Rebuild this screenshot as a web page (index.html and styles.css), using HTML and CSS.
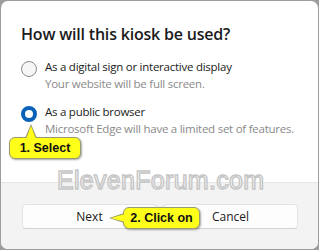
FILE: index.html
```html
<!DOCTYPE html>
<html>
<head>
<meta charset="utf-8">
<link rel="stylesheet" href="styles.css">
</head>
<body>
<div class="screen">
  <div class="dialog">
    <div class="content">
      <h1 class="title">How will this kiosk be used?</h1>
      <div class="option">
        <span class="radio"></span>
        <div class="labels">
          <div class="label">As a digital sign or interactive display</div>
          <div class="desc">Your website will be full screen.</div>
        </div>
      </div>
      <div class="option">
        <span class="radio checked"></span>
        <div class="labels">
          <div class="label">As a public browser</div>
          <div class="desc">Microsoft Edge will have a limited set of features.</div>
        </div>
      </div>
    </div>
    <div class="footer">
      <button class="btn">Next</button>
      <button class="btn">Cancel</button>
    </div>
    <div class="watermark">ElevenForum.com</div>
    <div class="callout callout-select">1. Select</div>
    <div class="callout callout-click">2. Click on</div>
  </div>
</div>
</body>
</html>
```
FILE: styles.css
```css
html, body {
  margin: 0;
  padding: 0;
}
body {
  width: 319px;
  height: 250px;
  background: #9d9d9d;
  overflow: hidden;
}
.screen {
  padding: 1px 1px 1px 1px;
  height: 248px;
}
.dialog {
  position: relative;
  width: 317px;
  height: 248px;
  background: #fff;
  border-radius: 7px;
  overflow: hidden;
  display: flex;
  flex-direction: column;
  font-family: "Open Sans", "Noto Sans", sans-serif;
  color: #1b1b1b;
}
.content {
  flex: 1;
  padding: 22px 20px 0 20px;
}
.title {
  margin: 0 0 13px 0;
  font-size: 16px;
  font-weight: 600;
  line-height: 22px;
  letter-spacing: -0.2px;
}
.option {
  display: flex;
  align-items: flex-start;
  gap: 8px;
  margin-bottom: 11px;
}
.radio {
  flex: none;
  box-sizing: border-box;
  width: 16px;
  height: 16px;
  margin-top: 3px;
  border-radius: 50%;
  border: 1px solid #8b8b8b;
  background: #f6f6f6;
}
.radio.checked {
  border: 4.5px solid #0a62b8;
  background: #fff;
}
.label {
  font-size: 11.5px;
  line-height: 17px;
  letter-spacing: -0.25px;
}
.desc {
  font-size: 11.5px;
  line-height: 17px;
  letter-spacing: -0.25px;
  color: #8a8a8a;
}
.footer {
  height: 67px;
  box-sizing: border-box;
  background: #f3f3f3;
  border-top: 1px solid #e6e6e6;
  padding: 21px 20px 0 21px;
  display: flex;
  gap: 6px;
  align-items: flex-start;
}
.btn {
  flex: 1;
  height: 25px;
  background: #fdfdfd;
  border: 1px solid #e3e3e3;
  border-bottom-color: #d2d2d2;
  border-radius: 4px;
  font-family: "Open Sans", "Noto Sans", sans-serif;
  font-size: 12px;
  color: #1b1b1b;
  padding: 0;
}
.watermark {
  position: absolute;
  left: 56px;
  top: 164px;
  font-family: "Liberation Sans", Arial, sans-serif;
  font-size: 25px;
  line-height: 30px;
  color: #ffffff;
  -webkit-text-stroke: 1.4px #c6c6c6;
  letter-spacing: 0.3px;
}
.callout {
  position: absolute;
  box-sizing: border-box;
  background: #ffff1a;
  border: 1px solid #9a9a70;
  border-radius: 6px;
  box-shadow: 1px 1px 2px rgba(0, 0, 0, 0.35);
  font-family: "Liberation Sans", Arial, sans-serif;
  font-weight: 700;
  font-size: 12.5px;
  color: #111;
  display: flex;
  align-items: center;
  justify-content: center;
}
.callout::before,
.callout::after {
  content: "";
  position: absolute;
  width: 0;
  height: 0;
}
.callout-select {
  left: 8px;
  top: 136px;
  width: 72px;
  height: 22px;
}
.callout-select::before {
  left: 15px;
  top: -14px;
  border-left: 6px solid transparent;
  border-right: 6px solid transparent;
  border-bottom: 14px solid #9a9a70;
}
.callout-select::after {
  left: 16px;
  top: -12px;
  border-left: 5px solid transparent;
  border-right: 5px solid transparent;
  border-bottom: 13px solid #ffff1a;
}
.callout-click {
  left: 122px;
  top: 206px;
  width: 77px;
  height: 22px;
}
.callout-click::before {
  left: -15px;
  top: 5px;
  border-top: 5px solid transparent;
  border-bottom: 5px solid transparent;
  border-right: 15px solid #9a9a70;
}
.callout-click::after {
  left: -13px;
  top: 6px;
  border-top: 4px solid transparent;
  border-bottom: 4px solid transparent;
  border-right: 14px solid #ffff1a;
}
```
